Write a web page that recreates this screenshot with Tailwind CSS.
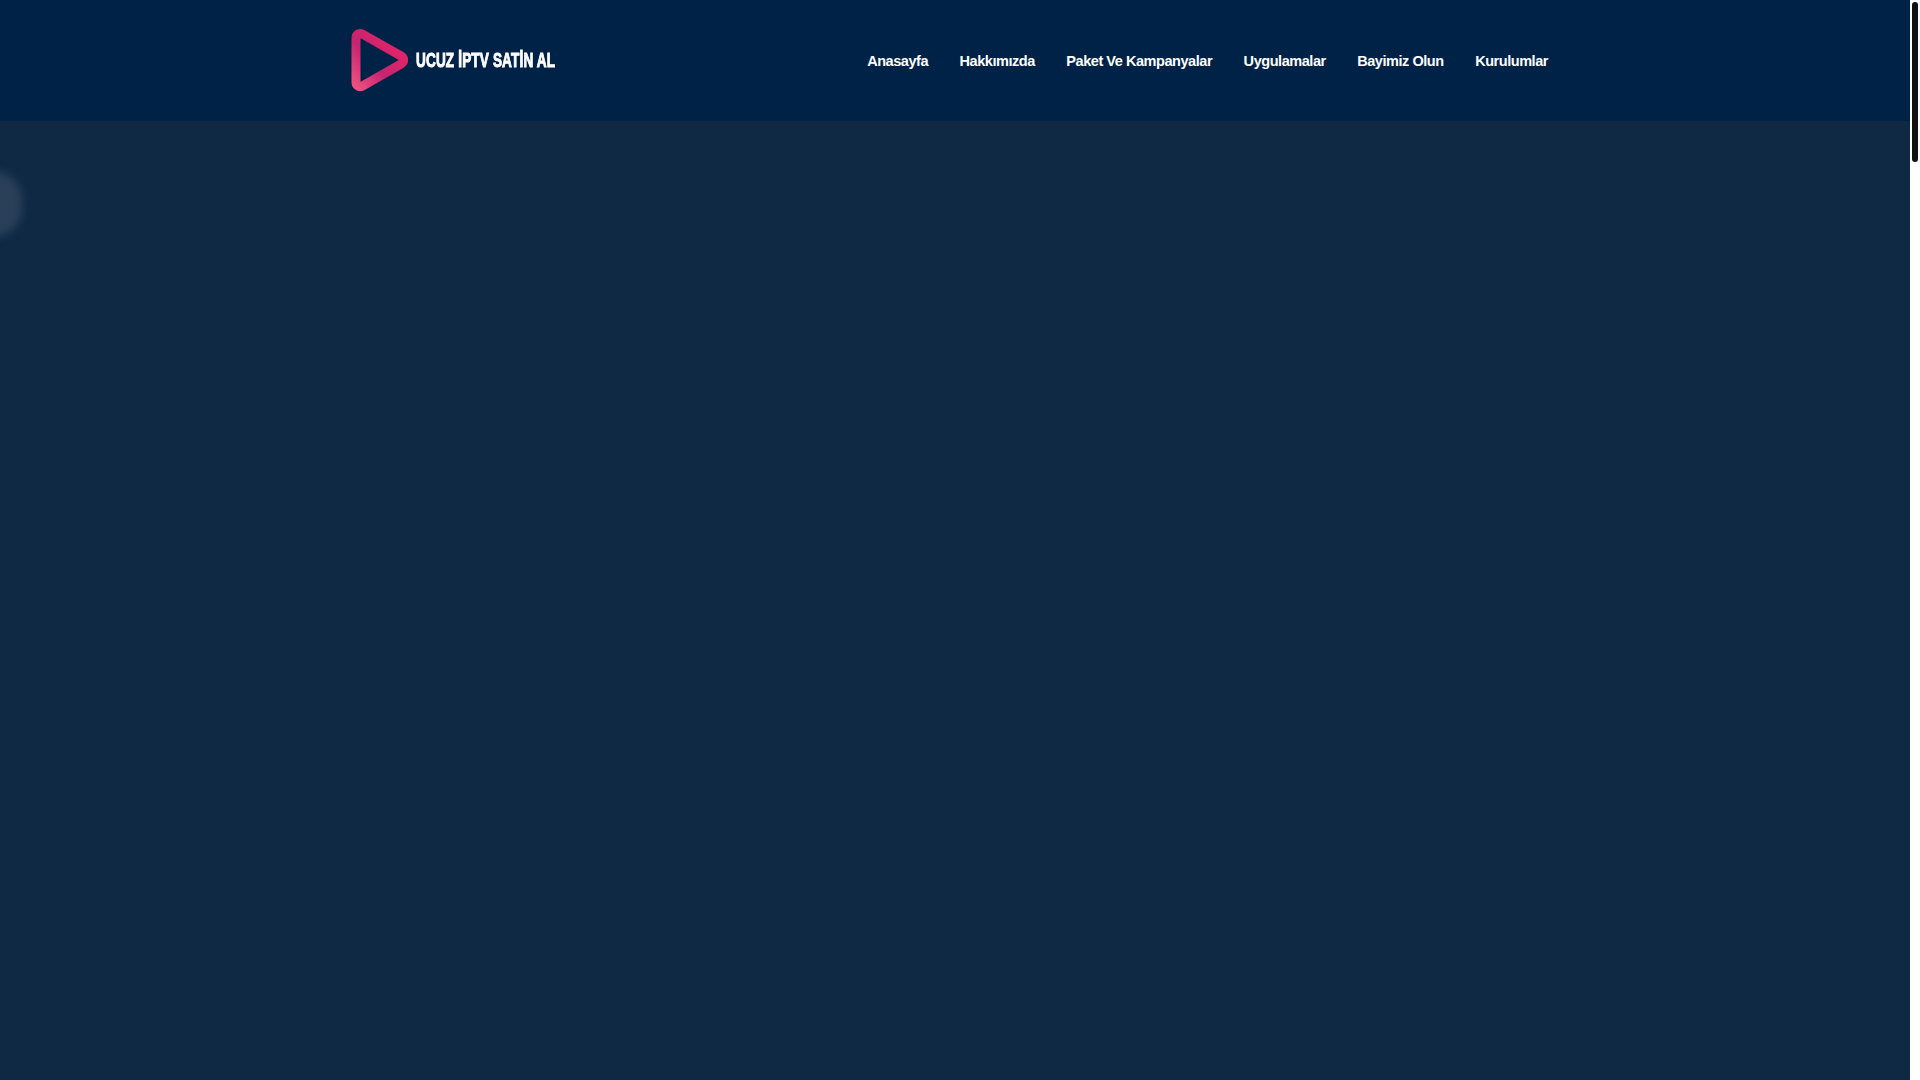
<!DOCTYPE html>
<html lang="en">
<head>
    <meta charset="UTF-8">
    <meta name="viewport" content="width=device-width, initial-scale=1.0">
    <title>Ucuz IPTV Satin Al</title>
    <script src="https://cdn.jsdelivr.net/npm/@tailwindcss/browser@4"></script>
</head>
<body class="h-screen overflow-hidden flex bg-white font-['Liberation_Sans',Arial,sans-serif]">
    <div class="relative flex-1 min-w-0 flex flex-col bg-[#0f2945]">
        <!-- Header -->
        <header class="h-[121px] bg-[#002247] flex items-center pl-[350px] pr-[362px]">
            <a href="#" class="flex items-center -mt-[2px]">
                <svg width="58" height="64" viewBox="0 0 58 64" fill="none">
                    <defs>
                        <linearGradient id="logo-grad" x1="0" y1="1" x2="1" y2="0">
                            <stop offset="0" stop-color="#ee4f80"/>
                            <stop offset="0.4" stop-color="#c5256f"/>
                            <stop offset="1" stop-color="#ee2466"/>
                        </linearGradient>
                    </defs>
                    <path d="M6 10 C6 6 9.500 4.500 12.500 6.200 L51 28 C54.500 30 54.500 34 51 36 L12.500 58 C9.500 59.700 6 58 6 54 Z" stroke="url(#logo-grad)" stroke-width="9" stroke-linejoin="round"/>
                </svg>
                <span class="ml-[8px] mt-[1px] w-[140px] text-[20px] leading-none font-bold text-white whitespace-nowrap origin-left scale-x-[0.68] [-webkit-text-stroke:1px_white] tracking-[0.2px]">UCUZ İPTV SATİN AL</span>
            </a>
            <!-- Nav -->
            <nav class="ml-auto pt-[2px] flex items-center gap-[31.500px] text-[14.500px] font-bold text-white tracking-[-0.45px]">
                <a href="#">Anasayfa</a>
                <a href="#">Hakkımızda</a>
                <a href="#">Paket Ve Kampanyalar</a>
                <a href="#">Uygulamalar</a>
                <a href="#">Bayimiz Olun</a>
                <a href="#">Kurulumlar</a>
            </nav>
        </header>
        <main class="flex-1"></main>
        <!-- Side button, mostly off screen -->
        <div class="absolute left-[-36px] top-[171px] w-[58px] h-[66px] rounded-full bg-[#2a4059] blur-[4px]"></div>
    </div>
    <!-- Scrollbar -->
    <div class="w-[10px] shrink-0 bg-white pt-[2px] flex justify-center">
        <div class="w-[6px] h-[160px] rounded-[3px] bg-[#111111]"></div>
    </div>
</body>
</html>
